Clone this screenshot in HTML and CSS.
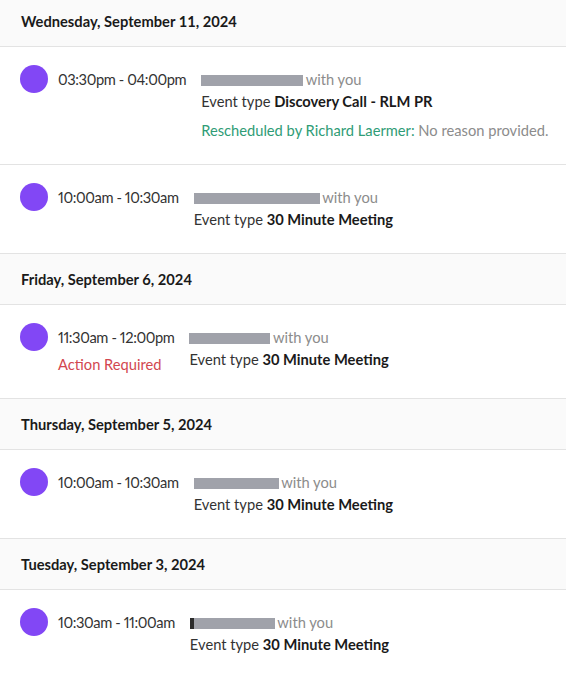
FILE: index.html
```html
<!DOCTYPE html>
<html lang="en">
<head>
<meta charset="utf-8">
<title>Scheduled events</title>
<link rel="stylesheet" href="styles.css">
</head>
<body>
<div class="list">
  <div class="day-header">Wednesday, September 11, 2024</div>
  <div class="event">
    <span class="dot"></span>
    <div class="when">
      <div class="time">03:30pm - 04:00pm</div>
    </div>
    <div class="info">
      <div class="line"><span class="redact w1"></span> <span class="muted">with you</span></div>
      <div class="line">Event type <b>Discovery Call - RLM PR</b></div>
      <div class="line note"><span class="green">Rescheduled by Richard Laermer:</span> <span class="muted">No reason provided.</span></div>
    </div>
  </div>
  <div class="event">
    <span class="dot"></span>
    <div class="when">
      <div class="time">10:00am - 10:30am</div>
    </div>
    <div class="info">
      <div class="line"><span class="redact w2"></span> <span class="muted">with you</span></div>
      <div class="line">Event type <b>30 Minute Meeting</b></div>
    </div>
  </div>

  <div class="day-header">Friday, September 6, 2024</div>
  <div class="event">
    <span class="dot"></span>
    <div class="when">
      <div class="time">11:30am - 12:00pm</div>
      <div class="action">Action Required</div>
    </div>
    <div class="info">
      <div class="line"><span class="redact w3"></span> <span class="muted">with you</span></div>
      <div class="line">Event type <b>30 Minute Meeting</b></div>
    </div>
  </div>

  <div class="day-header">Thursday, September 5, 2024</div>
  <div class="event">
    <span class="dot"></span>
    <div class="when">
      <div class="time">10:00am - 10:30am</div>
    </div>
    <div class="info">
      <div class="line"><span class="redact w4"></span> <span class="muted">with you</span></div>
      <div class="line">Event type <b>30 Minute Meeting</b></div>
    </div>
  </div>

  <div class="day-header">Tuesday, September 3, 2024</div>
  <div class="event">
    <span class="dot"></span>
    <div class="when">
      <div class="time">10:30am - 11:00am</div>
    </div>
    <div class="info">
      <div class="line"><span class="redact w5"></span> <span class="muted">with you</span></div>
      <div class="line">Event type <b>30 Minute Meeting</b></div>
    </div>
  </div>
</div>
</body>
</html>
```

FILE: styles.css
```css
html, body {
  margin: 0;
  padding: 0;
  background: #ffffff;
}

body {
  font-family: Lato, "Open Sans", "Liberation Sans", Arial, sans-serif;
  font-size: 14.7px;
  color: #1a1a1a;
  overflow: hidden;
}

.list {
  margin-top: -4px;
}

.day-header {
  height: 50px;
  display: flex;
  align-items: center;
  padding-left: 21px;
  background: #fafafa;
  border-bottom: 1px solid #e3e3e3;
  font-weight: 700;
  color: #1a1a1a;
}

.event {
  display: flex;
  align-items: flex-start;
  padding: 18px 0 23px 20px;
  border-bottom: 1px solid #e3e3e3;
}

.dot {
  flex: none;
  width: 28px;
  height: 28px;
  border-radius: 50%;
  background: #8247f5;
}

.when {
  margin-left: 10px;
  padding-top: 3px;
}

.time {
  line-height: 22px;
  color: #333333;
  font-variant-numeric: proportional-nums;
  letter-spacing: -0.4px;
}

.action {
  margin-top: 5px;
  line-height: 22px;
  color: #d2474f;
}

.info {
  margin-left: 15px;
  padding-top: 3px;
}

.line {
  line-height: 22px;
  color: #333333;
  white-space: nowrap;
}

.line b {
  color: #1a1a1a;
  font-weight: 700;
}

.note {
  margin-top: 7px;
}

.muted {
  color: #8c8c8c;
}

.green {
  color: #2f9c76;
}

.redact {
  display: inline-block;
  height: 11px;
  vertical-align: -1px;
  background: #a0a2aa;
  margin-right: -1px;
}

.w1 { width: 102px; }
.w2 { width: 126px; }
.w3 { width: 81px; }
.w4 { width: 85px; }
.w5 {
  width: 81px;
  border-left: 4px solid #2b2b2b;
}
```
